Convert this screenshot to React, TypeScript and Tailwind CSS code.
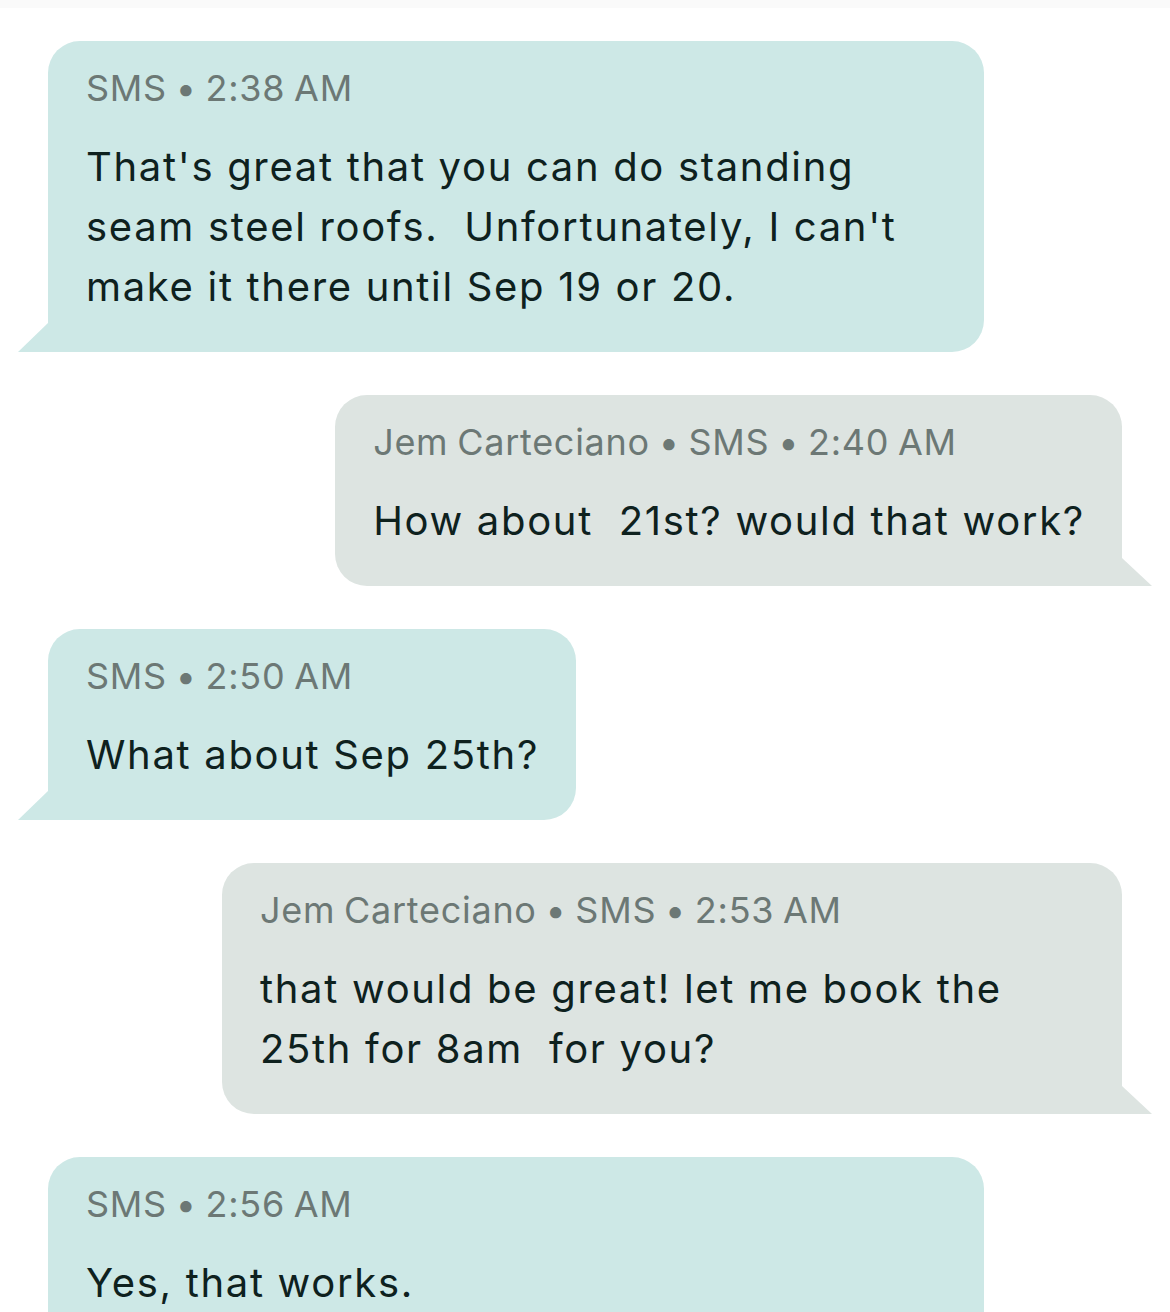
import type { ReactNode } from "react";

type Message = {
  side: "in" | "out";
  meta: string;
  lines: string[];
  width?: string;
};

const MESSAGES: Message[] = [
  {
    side: "in",
    meta: "SMS • 2:38 AM",
    lines: ["That's great that you can do standing", "seam steel roofs.  Unfortunately, I can't", "make it there until Sep 19 or 20."],
    width: "w-[936px]",
  },
  {
    side: "out",
    meta: "Jem Carteciano • SMS • 2:40 AM",
    lines: ["How about  21st? would that work?"],
  },
  {
    side: "in",
    meta: "SMS • 2:50 AM",
    lines: ["What about Sep 25th?"],
  },
  {
    side: "out",
    meta: "Jem Carteciano • SMS • 2:53 AM",
    lines: ["that would be great! let me book the", "25th for 8am  for you?"],
    width: "w-[900px]",
  },
  {
    side: "in",
    meta: "SMS • 2:56 AM",
    lines: ["Yes, that works."],
    width: "w-[936px]",
  },
];

function Tail({ side, color }: { side: "in" | "out"; color: string }) {
  // little corner wedge sticking out of the bottom of the bubble
  return side === "in" ? (
    <svg className="absolute bottom-0 left-[-30px]" width="31" height="29" viewBox="0 0 31 29">
      <polygon points="0,29 31,29 31,0 30,0" fill={color} />
    </svg>
  ) : (
    <svg className="absolute bottom-0 right-[-30px]" width="31" height="28" viewBox="0 0 31 28">
      <polygon points="0,0 1,0 31,28 0,28" fill={color} />
    </svg>
  );
}

function Bubble({ msg }: { msg: Message }) {
  const incoming = msg.side === "in";
  const color = incoming ? "#cde8e6" : "#dde4e1";
  return (
    <div className={incoming ? "flex justify-start pl-[48px]" : "flex justify-end pr-[48px]"}>
      <div
        className={
          "relative pl-[38px] pr-[37px] pt-[25px] pb-[35px] " +
          (incoming ? "rounded-[32px] rounded-bl-none bg-[#cde8e6] " : "rounded-[32px] rounded-br-none bg-[#dde4e1] ") +
          (msg.width ?? "")
        }
      >
        <div className="text-[36px] leading-[44px] font-[370] tracking-[0.02em] [word-spacing:-2px] text-[#6c7875] whitespace-pre">
          {msg.meta}
        </div>
        <div className="mt-[27px] text-[40px] leading-[60px] font-[370] tracking-[0.042em] text-[#0e211e]">
          {msg.lines.map((l, i) => (
            <Line key={i}>{l}</Line>
          ))}
        </div>
        <Tail side={msg.side} color={color} />
      </div>
    </div>
  );
}

function Line({ children }: { children: ReactNode }) {
  return <div className="whitespace-pre">{children}</div>;
}

export default function App() {
  return (
    <div className="w-[1170px] h-[1312px] overflow-hidden bg-white font-['Inter',sans-serif]">
      <div className="h-[8px] bg-[#fafafa]" />
      <div className="flex flex-col gap-[43px] pt-[33px]">
        {MESSAGES.map((m, i) => (
          <Bubble key={i} msg={m} />
        ))}
      </div>
    </div>
  );
}
